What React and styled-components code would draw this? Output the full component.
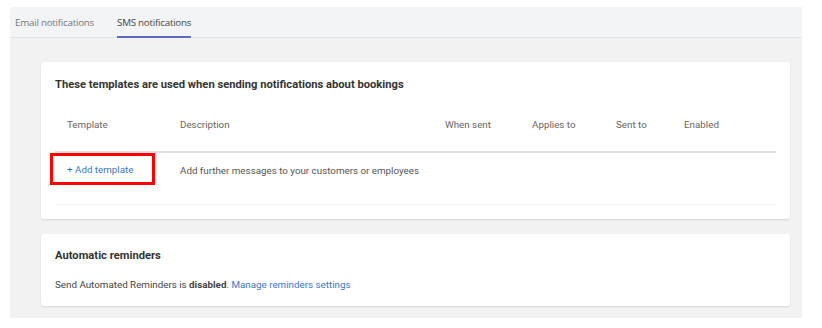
import React from 'react'
import styled, { createGlobalStyle } from 'styled-components'

const GlobalStyle = createGlobalStyle`
  *, *::before, *::after {
    box-sizing: border-box;
  }
  body {
    margin: 0;
    background: #fff;
    font-family: Roboto, 'Liberation Sans', Arial, sans-serif;
  }
`

const Page = styled.div`
  padding: 7px 20px 10px 10px;
`

const Panel = styled.section`
  width: 792px;
  background: #f2f2f2;
`

const TabBar = styled.nav`
  display: flex;
  height: 31px;
  padding-left: 5px;
  gap: 23px;
  background: #f3f4f6;
  border-bottom: 1px solid #e0e5ec;
`

const Tab = styled.div`
  display: flex;
  align-items: center;
  font-family: 'Open Sans', 'Noto Sans', sans-serif;
  font-size: 9.8px;
  letter-spacing: -0.25px;
  color: ${({ active }) => (active ? '#444' : '#777')};
  border-bottom: 2px solid ${({ active }) => (active ? '#5c6bc0' : 'transparent')};
  margin-bottom: -1px;
  padding-top: 2px;
`

const Body = styled.div`
  display: flex;
  flex-direction: column;
  gap: 15px;
  padding: 24px 12px 12px 31px;
`

const Card = styled.div`
  background: #fff;
  border-radius: 3px;
  box-shadow: 0 1px 2px rgba(0, 0, 0, 0.12);
  padding: ${({ pad }) => pad};
`

const CardTitle = styled.h2`
  margin: 0;
  font-size: 11.2px;
  font-weight: 700;
  color: #333;
  line-height: 16px;
`

const Table = styled.div``

const Row = styled.div`
  display: grid;
  grid-template-columns: 125px 265px 87px 84px 68px 1fr;
  align-items: start;
  height: ${({ h }) => h}px;
  padding-top: ${({ top }) => top}px;
  border-bottom: ${({ line }) => line};
  font-size: 9.8px;
  line-height: 12px;
  color: ${({ head }) => (head ? '#666' : '#555')};
`

const Cell = styled.div`
  padding-left: ${({ first }) => (first ? '12px' : '0')};
  padding-top: ${({ top }) => top || 0}px;
  white-space: nowrap;
`

const Highlight = styled.div`
  justify-self: start;
  margin-left: -5px;
  border: 3px solid #f00;
  padding: 8px 19px 6px 14px;
`

const Link = styled.a`
  color: #3b78c2;
  text-decoration: none;
  cursor: pointer;
`

const Text = styled.p`
  margin: 15px 0 0;
  font-size: 9.8px;
  line-height: 12px;
  color: #444;
`

export default function App() {
  return (
    <>
      <GlobalStyle />
      <Page>
        <Panel>
          <TabBar>
            <Tab>Email notifications</Tab>
            <Tab active>SMS notifications</Tab>
          </TabBar>
          <Body>
            <Card pad="15px 14px 14px">
              <CardTitle>These templates are used when sending notifications about bookings</CardTitle>
              <Table>
                <Row head h={60} top={26} line="2px solid #dde1e6">
                  <Cell first>Template</Cell>
                  <Cell>Description</Cell>
                  <Cell>When sent</Cell>
                  <Cell>Applies to</Cell>
                  <Cell>Sent to</Cell>
                  <Cell>Enabled</Cell>
                </Row>
                <Row h={52} top={0} line="1px solid #f0f1f3">
                  <Highlight>
                    <Link>+ Add template</Link>
                  </Highlight>
                  <Cell top={12}>Add further messages to your customers or employees</Cell>
                </Row>
              </Table>
            </Card>
            <Card pad="14px 14px 15px">
              <CardTitle>Automatic reminders</CardTitle>
              <Text>
                Send Automated Reminders is <b>disabled</b>. <Link>Manage reminders settings</Link>
              </Text>
            </Card>
          </Body>
        </Panel>
      </Page>
    </>
  )
}
